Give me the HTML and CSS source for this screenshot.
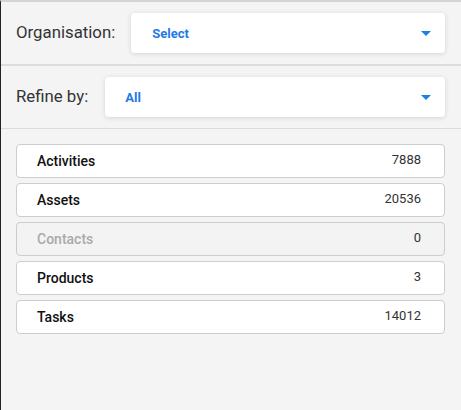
FILE: index.html
```html
<!DOCTYPE html>
<html>
<head>
<meta charset="utf-8">
<link rel="stylesheet" href="styles.css">
</head>
<body>
<div class="panel">
  <div class="filter-row filter-row--thick">
    <label class="filter-label">Organisation:</label>
    <div class="select">
      <span class="select-value">Select</span>
      <span class="select-arrow"></span>
    </div>
  </div>
  <div class="filter-row filter-row--refine">
    <label class="filter-label">Refine by:</label>
    <div class="select">
      <span class="select-value">All</span>
      <span class="select-arrow"></span>
    </div>
  </div>
  <ul class="list">
    <li class="item"><span class="item-name">Activities</span><span class="item-count">7888</span></li>
    <li class="item"><span class="item-name">Assets</span><span class="item-count">20536</span></li>
    <li class="item item--disabled"><span class="item-name">Contacts</span><span class="item-count">0</span></li>
    <li class="item"><span class="item-name">Products</span><span class="item-count">3</span></li>
    <li class="item"><span class="item-name">Tasks</span><span class="item-count">14012</span></li>
  </ul>
</div>
</body>
</html>
```

FILE: styles.css
```css
html, body {
  margin: 0;
  padding: 0;
  height: 100%;
}
body {
  font-family: Roboto, "Liberation Sans", Arial, sans-serif;
  background: #f4f4f4;
}
.panel {
  box-sizing: border-box;
  min-height: 100vh;
  border-left: 1px solid #222;
  border-top: 2px solid #d4d4d4;
  background: #f4f4f4;
}
.filter-row {
  display: flex;
  align-items: center;
  gap: 16px;
  padding: 11px 16px 11px 15px;
  border-bottom: 1px solid #dcdcdc;
}
.filter-row--thick {
  border-bottom-width: 2px;
}
.filter-row--refine {
  gap: 17px;
}
.filter-label {
  font-size: 16.8px;
  line-height: 20px;
  margin-top: -2px;
  color: #333;
  white-space: nowrap;
}
.select {
  flex: 1;
  height: 40px;
  display: flex;
  align-items: center;
  justify-content: space-between;
  padding: 0 14px 0 21px;
  background: #fff;
  border-radius: 4px;
  box-shadow: 0 1px 5px rgba(0, 0, 0, 0.13);
}
.filter-row--refine .select {
  padding-left: 20px;
}
.select-value {
  font-size: 13px;
  font-weight: 700;
  color: #1e7ae6;
}
.select-arrow {
  width: 0;
  height: 0;
  border-left: 5px solid transparent;
  border-right: 5px solid transparent;
  border-top: 5px solid #1a7fe6;
}
.list {
  list-style: none;
  margin: 0;
  padding: 15px 16px 0 15px;
  display: flex;
  flex-direction: column;
  gap: 5px;
}
.item {
  box-sizing: border-box;
  height: 34px;
  display: flex;
  align-items: center;
  justify-content: space-between;
  padding: 0 23px 0 20px;
  background: #fff;
  border: 1px solid #cdcdcd;
  border-radius: 4px;
}
.item-name {
  font-size: 14px;
  font-weight: 500;
  color: #111;
}
.item-count {
  font-size: 13px;
  color: #333;
  margin-top: -4px;
}
.item--disabled {
  background: #f3f3f3;
}
.item--disabled .item-name {
  color: #aaa;
}
```
